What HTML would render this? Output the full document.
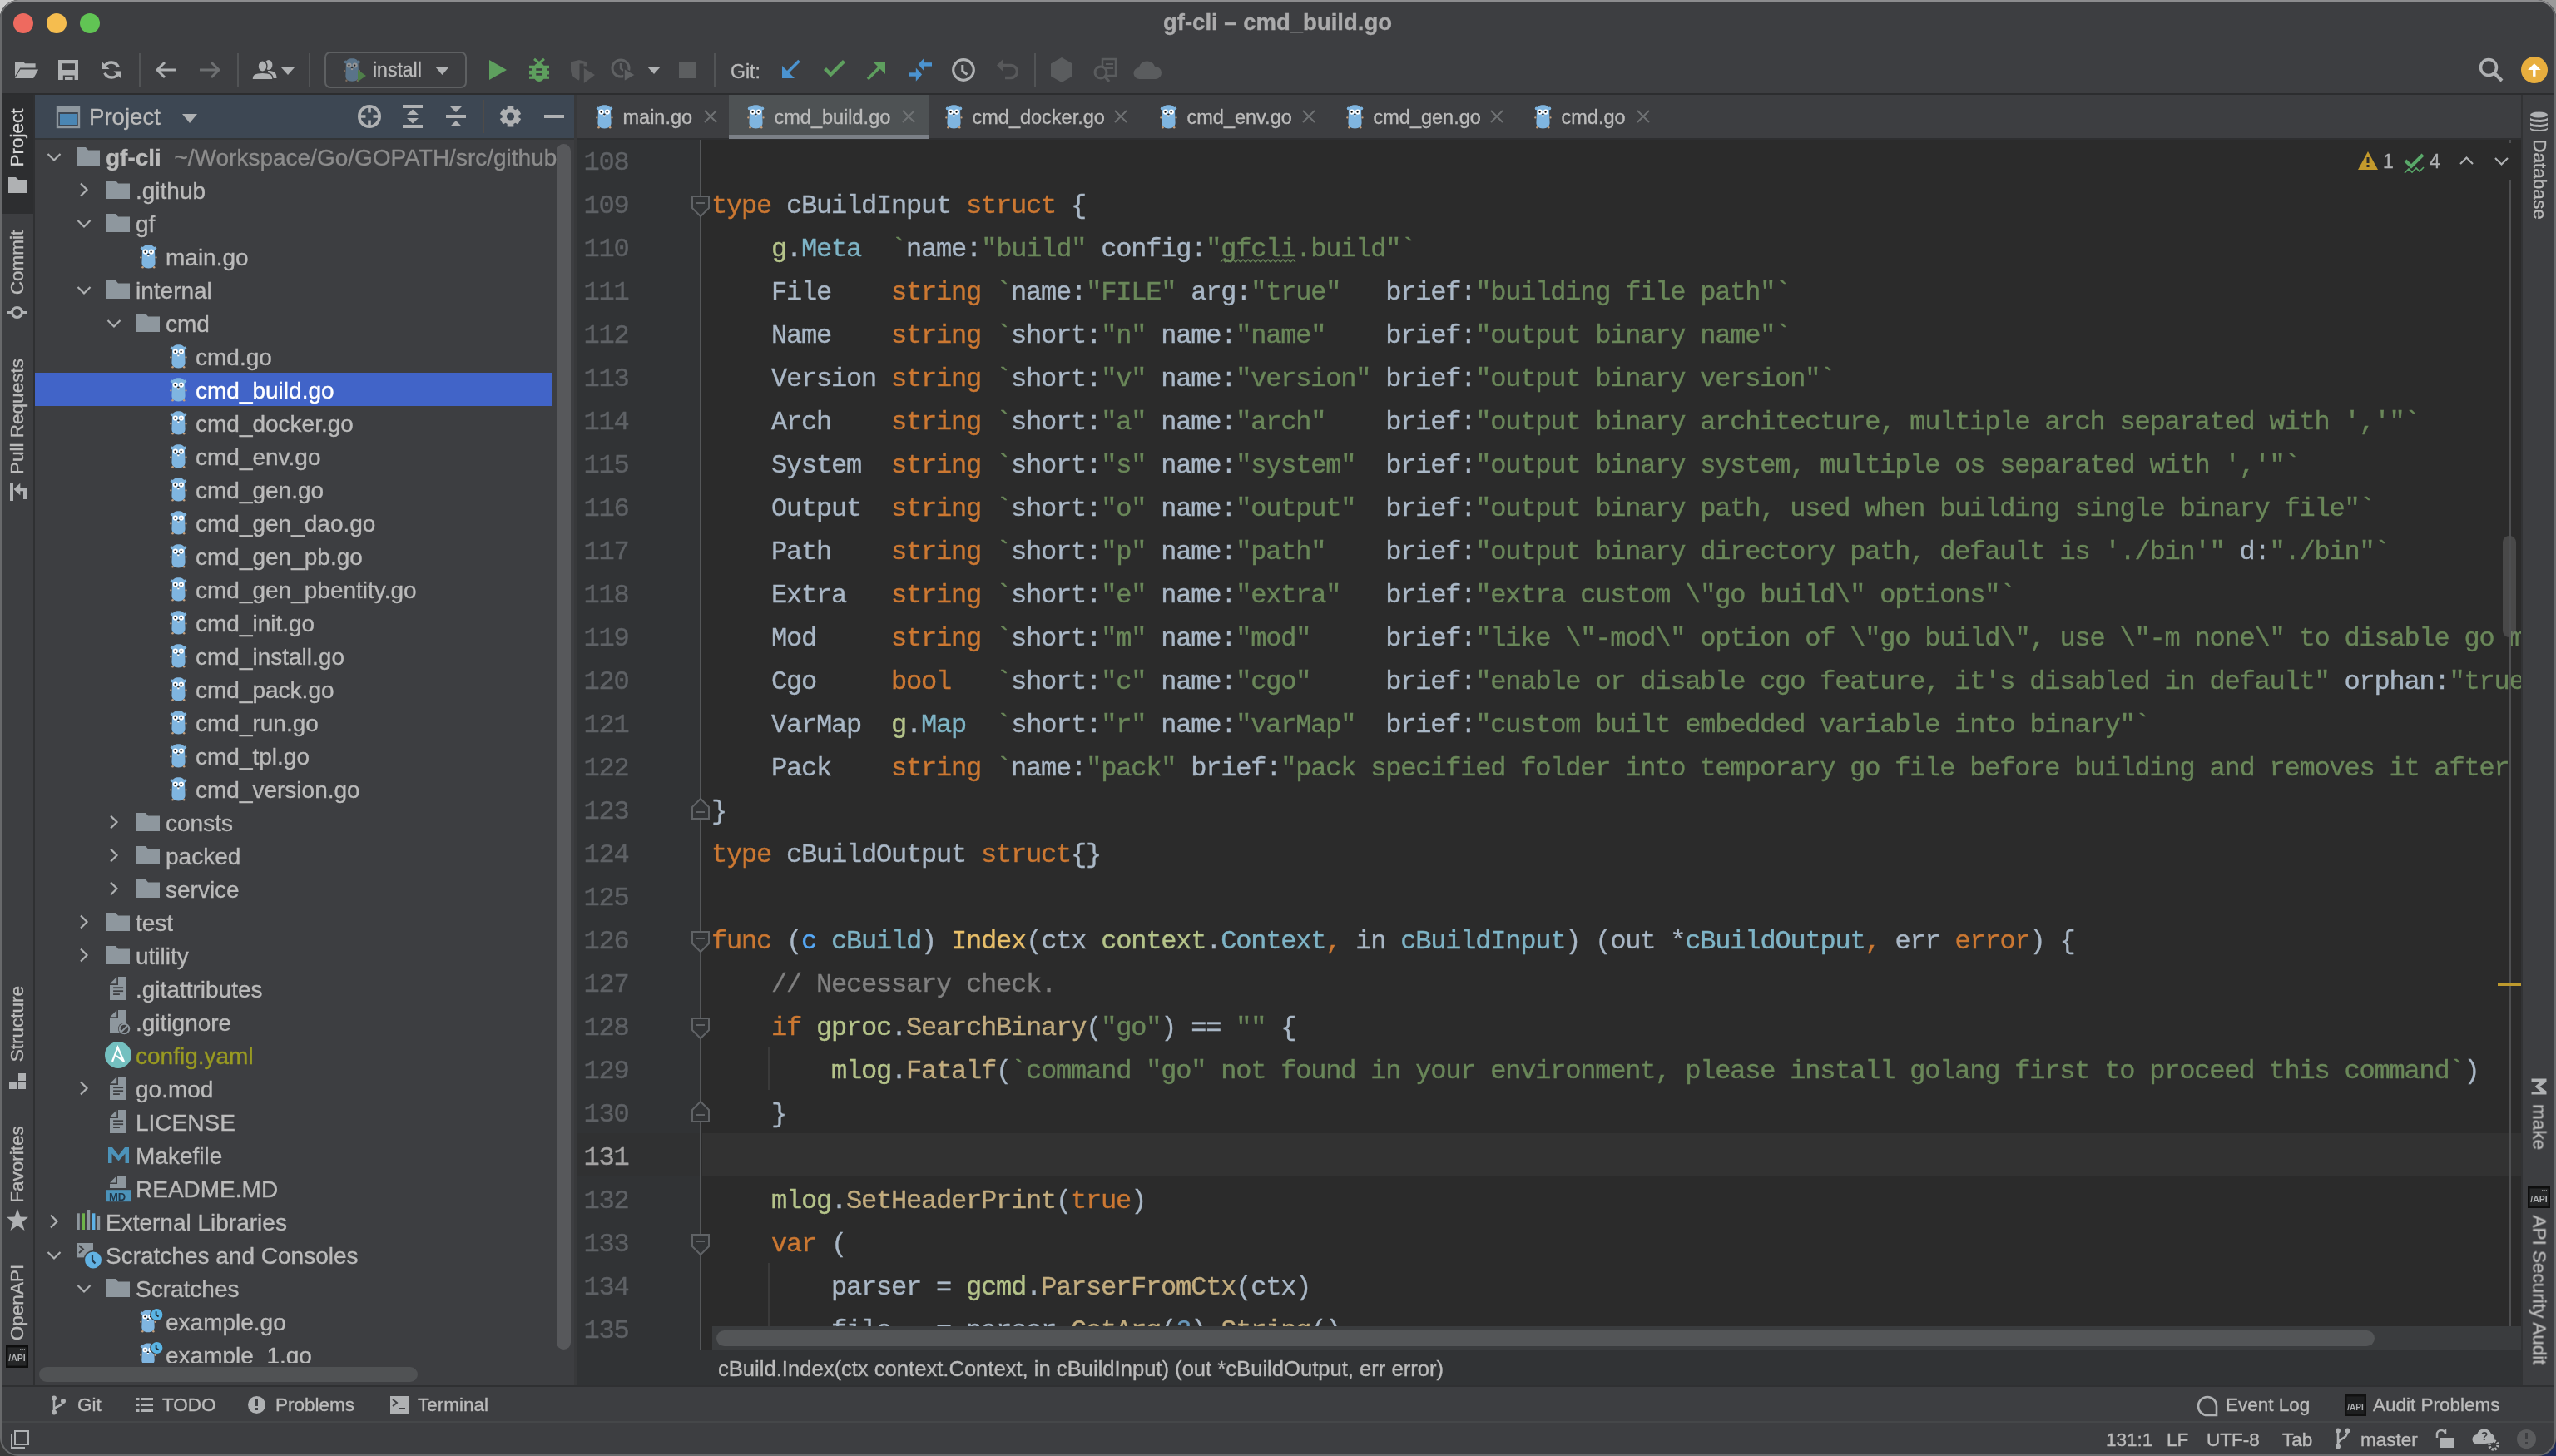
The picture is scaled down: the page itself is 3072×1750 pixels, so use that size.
<!DOCTYPE html><html><head><meta charset="utf-8"><style>
html,body{margin:0;padding:0;width:3072px;height:1750px;overflow:hidden;background:#2a2c30;}
.cn{position:absolute;width:40px;height:40px}
.a{position:absolute;white-space:pre;margin:0;padding:0;-webkit-text-stroke:0.35px currentColor;}
svg.a{overflow:visible}
#win{position:absolute;left:0;top:0;width:3072px;height:1750px;border-radius:22px;overflow:hidden;background:#3D3E41;will-change:transform;}
</style></head><body>
<svg width="0" height="0" style="position:absolute">
<defs>
<symbol id="gopher" viewBox="0 0 21 29">
<path d="M3 6 C3 2 6.2 0.2 10.5 0.2 C14.8 0.2 18 2 18 6 L18.5 20 C19.3 26 15.5 28.4 10.5 28.4 C5.5 28.4 1.7 26 2.5 20 Z" fill="#7FB5E0"/>
<circle cx="2.7" cy="4.4" r="1.9" fill="#7FB5E0"/><circle cx="18.3" cy="4.4" r="1.9" fill="#7FB5E0"/>
<circle cx="6.8" cy="8.6" r="3.1" fill="#fff"/><circle cx="13.9" cy="8.6" r="3.1" fill="#fff"/>
<circle cx="6.6" cy="8.7" r="1.15" fill="#000"/><circle cx="13.6" cy="8.7" r="1.15" fill="#000"/>
<rect x="9.3" y="11.9" width="2.1" height="2.4" fill="#fff"/><ellipse cx="10.35" cy="11.5" rx="1.3" ry="0.9" fill="#222"/>
<circle cx="1.3" cy="15.4" r="1.15" fill="#C4A07E"/><circle cx="19.5" cy="15.4" r="1.15" fill="#C4A07E"/>
<circle cx="3.5" cy="27.3" r="1.25" fill="#C4A07E"/><circle cx="17.2" cy="27.3" r="1.25" fill="#C4A07E"/>
</symbol>
<symbol id="folder" viewBox="0 0 28 22">
<path d="M0 0 H11 L14 3.5 H28 V22 H0 Z" fill="#8E979E"/>
</symbol>
<symbol id="chevR" viewBox="0 0 12 18"><path d="M2 1.5 L9.5 9 L2 16.5" fill="none" stroke="#AFB1B3" stroke-width="2.2"/></symbol>
<symbol id="chevD" viewBox="0 0 18 12"><path d="M1.5 2 L9 9.5 L16.5 2" fill="none" stroke="#AFB1B3" stroke-width="2.2"/></symbol>
<symbol id="doc" viewBox="0 0 20 28">
<path d="M10 0 H20 V28 H0 V10 H10 Z" fill="#8E979E"/><path d="M0.3 8.2 L8.2 0.3 V8.2 Z" fill="#8E979E"/>
<rect x="4.1" y="12.3" width="12" height="1.8" fill="#3D3E41"/><rect x="4.1" y="16.3" width="12" height="1.8" fill="#3D3E41"/><rect x="4.1" y="20.2" width="7.8" height="1.8" fill="#3D3E41"/>
</symbol>
<symbol id="docplain" viewBox="0 0 20 28">
<path d="M10 0 H20 V28 H0 V10 H10 Z" fill="#8E979E"/><path d="M0.3 8.2 L8.2 0.3 V8.2 Z" fill="#8E979E"/>
</symbol>
</defs></svg>
<div class="cn" style="left:0;top:0;background:#cfcfcf"></div><div class="cn" style="right:0;top:0;background:#9a9a9a"></div><div class="cn" style="left:0;bottom:0;background:#3a3a3a"></div><div class="cn" style="right:0;bottom:0;background:#1f2b5a"></div>
<div id="win">

<div class="a" style="left:0px;top:0px;width:3072px;height:112px;background:#3D3E41;"></div>
<div class="a" style="left:16px;top:16px;width:24px;height:24px;border-radius:50%;background:#EE6A5F"></div>
<div class="a" style="left:56px;top:16px;width:24px;height:24px;border-radius:50%;background:#F5BD4F"></div>
<div class="a" style="left:96px;top:16px;width:24px;height:24px;border-radius:50%;background:#61C454"></div>
<div class="a " style="left:1398px;top:10.28px;font:bold 27.5px/34.38px 'Liberation Sans', sans-serif;color:#ABABAC;">gf-cli – cmd_build.go</div>
<div class="a" style="left:167px;top:64px;width:2px;height:40px;background:#525456;"></div>
<div class="a" style="left:285px;top:64px;width:2px;height:40px;background:#525456;"></div>
<div class="a" style="left:371px;top:64px;width:2px;height:40px;background:#525456;"></div>
<div class="a" style="left:858px;top:64px;width:2px;height:40px;background:#525456;"></div>
<div class="a" style="left:1243px;top:64px;width:2px;height:40px;background:#525456;"></div>
<svg class="a" style="left:18px;top:74px;" width="28" height="20" viewBox="0 0 28 20"><path d="M0 0 H10 L12 2.2 H24.6 V7.6 H6.2 L0 18Z" fill="#AFB1B3"/><path d="M6.4 9.6 H28.2 L22.2 20 H0 Z" fill="#AFB1B3"/></svg>
<svg class="a" style="left:70px;top:72px;" width="24" height="24" viewBox="0 0 24 24"><path d="M0 0 H24 V24 H0 Z M4.2 4.2 V12 H20 V4.2 Z M5.8 18.4 V24 H19.6 V18.4 Z" fill="#AFB1B3" fill-rule="evenodd"/><rect x="8" y="20.4" width="9.6" height="3.6" fill="#AFB1B3"/></svg>
<svg class="a" style="left:122px;top:72px;" width="24" height="24" viewBox="0 0 24 24"><path d="M20.2 8.5 A9.2 9.2 0 0 0 3.8 7.5" fill="none" stroke="#AFB1B3" stroke-width="3.4"/><path d="M3.8 15.5 A9.2 9.2 0 0 0 20.2 16.5" fill="none" stroke="#AFB1B3" stroke-width="3.4"/><path d="M0 1.5 V11 H9.5 Z" fill="#AFB1B3"/><path d="M24 23 V13.5 H14.5 Z" fill="#AFB1B3"/></svg>
<svg class="a" style="left:186px;top:73px;" width="26" height="22" viewBox="0 0 26 22"><path d="M26 11 H4 M12 2 L3 11 L12 20" fill="none" stroke="#AFB1B3" stroke-width="3"/></svg>
<svg class="a" style="left:240px;top:73px;" width="26" height="22" viewBox="0 0 26 22"><path d="M0 11 H22 M14 2 L23 11 L14 20" fill="none" stroke="#6E7072" stroke-width="3"/></svg>
<svg class="a" style="left:303px;top:72px;" width="30" height="24" viewBox="0 0 30 24"><ellipse cx="19.8" cy="6" rx="4.6" ry="6" fill="#AFB1B3"/><path d="M19 13 C26 13 29.5 15 29.5 22 H20Z" fill="#AFB1B3"/><ellipse cx="12.5" cy="7.5" rx="5.4" ry="6.8" fill="#AFB1B3" stroke="#3D3E41" stroke-width="1.4"/><path d="M0 23.6 C0 17 4 15.2 12.5 15.2 C21 15.2 25 17 25 23.6Z" fill="#AFB1B3" stroke="#3D3E41" stroke-width="1.4"/></svg>
<svg class="a" style="left:338px;top:81px;" width="16" height="9" viewBox="0 0 16 9"><path d="M0 0 H16 L8 9Z" fill="#AFB1B3"/></svg>
<div class="a" style="left:390px;top:62px;width:167px;height:40px;border:2px solid #5E6062;border-radius:7px;"></div>
<svg class="a" style="left:413px;top:70px;opacity:.45" width="21" height="29"><use href="#gopher" width="20.5" height="28.5"/></svg>
<svg class="a" style="left:430px;top:84px;" width="11" height="14" viewBox="0 0 11 14"><path d="M0 0 L10 7 L0 14Z" fill="#4F7F49"/></svg>
<div class="a " style="left:448px;top:70.15px;font:normal 23px/28.75px 'Liberation Sans', sans-serif;color:#BBBBBB;">install</div>
<svg class="a" style="left:523px;top:80px;" width="17" height="10" viewBox="0 0 17 10"><path d="M0 0 H17 L8.5 10Z" fill="#AFB1B3"/></svg>
<svg class="a" style="left:588px;top:72px;" width="21" height="24" viewBox="0 0 21 24"><path d="M0 0 L21 12 L0 24Z" fill="#5E9F5E"/></svg>
<svg class="a" style="left:636px;top:70px;" width="24" height="28" viewBox="0 0 24 28"><path d="M6 0.8 L12 5.8 L18 0.8" fill="none" stroke="#5E9F5E" stroke-width="3"/><ellipse cx="12" cy="16.7" rx="7.6" ry="11.3" fill="#5E9F5E"/><rect x="0" y="8.7" width="24" height="16.1" fill="#5E9F5E"/><rect x="0" y="12.2" width="3" height="2.6" fill="#3D3E41"/><rect x="21" y="12.2" width="3" height="2.6" fill="#3D3E41"/><rect x="0" y="19.5" width="3" height="2.1" fill="#3D3E41"/><rect x="21" y="19.5" width="3" height="2.1" fill="#3D3E41"/><rect x="8.3" y="12.2" width="7.6" height="2.6" fill="#3D3E41"/><rect x="8.3" y="18" width="7.6" height="2.7" fill="#3D3E41"/></svg>
<svg class="a" style="left:686px;top:72px;" width="30" height="28" viewBox="0 0 30 28"><path d="M0 2.5 L10 0 L20 2.5 V7.5 H15.5 V4.5 H10.5 V22 L10 24.5 C5 22.5 0 19 0 12Z" fill="#58595B"/><path d="M15.8 10 L29 18 L15.8 28Z" fill="#58595B"/></svg>
<svg class="a" style="left:734px;top:70px;" width="30" height="28" viewBox="0 0 30 28"><circle cx="12" cy="12" r="10" fill="none" stroke="#5F6163" stroke-width="3"/><path d="M12 6 V12 L15 15" stroke="#5F6163" stroke-width="2.5" fill="none"/><path d="M16 12 L30 20 L16 28Z" fill="#5F6163" stroke="#3D3E41" stroke-width="1.5"/></svg>
<svg class="a" style="left:778px;top:80px;" width="16" height="9" viewBox="0 0 16 9"><path d="M0 0 H16 L8 9Z" fill="#AFB1B3"/></svg>
<div class="a" style="left:816px;top:74px;width:20px;height:20px;background:#5C5E60;"></div>
<div class="a " style="left:878px;top:71.65px;font:normal 23px/28.75px 'Liberation Sans', sans-serif;color:#BBBBBB;">Git:</div>
<svg class="a" style="left:939px;top:71px;" width="24" height="24" viewBox="0 0 24 24"><path d="M21.5 2 L5 18.5" stroke="#4B93D0" stroke-width="3.6"/><path d="M1 8 V23 H16 Z" fill="#4B93D0"/></svg>
<svg class="a" style="left:989px;top:71px;" width="28" height="24" viewBox="0 0 28 24"><path d="M2.5 11.5 L9.5 18.5 L25.5 2.5" fill="none" stroke="#5E9F5E" stroke-width="4.4"/></svg>
<svg class="a" style="left:1041px;top:73px;" width="24" height="24" viewBox="0 0 24 24"><path d="M2 22 L19 5" stroke="#5E9F5E" stroke-width="3.6"/><path d="M8 1 H23 V16 Z" fill="#5E9F5E"/></svg>
<svg class="a" style="left:1091px;top:69px;" width="30" height="30" viewBox="0 0 30 30"><path d="M12.7 8.3 L19.9 0.5 V16.8Z" fill="#4B93D0"/><rect x="19.5" y="6.2" width="9.5" height="4.4" fill="#4B93D0"/><path d="M17.1 20.5 L9.8 12.4 V28.7Z" fill="#4B93D0"/><rect x="1" y="18.3" width="9.2" height="4.4" fill="#4B93D0"/></svg>
<svg class="a" style="left:1143px;top:69px;" width="30" height="30" viewBox="0 0 30 30"><circle cx="15" cy="15" r="12.3" fill="none" stroke="#AFB1B3" stroke-width="3.2"/><path d="M13.8 9 V16.5 L19.5 20.5" fill="none" stroke="#AFB1B3" stroke-width="3"/></svg>
<svg class="a" style="left:1198px;top:70px;" width="27" height="26" viewBox="0 0 27 26"><path d="M6 8.5 H17 A7.5 7.5 0 0 1 17 23.5 H10" fill="none" stroke="#58595B" stroke-width="3.4"/><path d="M0 8.5 L7.5 1 V16Z" fill="#58595B"/></svg>
<svg class="a" style="left:1261px;top:69px;" width="30" height="30" viewBox="0 0 30 30"><path d="M15 0 L28 7.5 V22.5 L15 30 L2 22.5 V7.5Z" fill="#5A5C5E"/></svg>
<svg class="a" style="left:1313px;top:70px;" width="30" height="30" viewBox="0 0 30 30"><rect x="12" y="1" width="16" height="20" fill="none" stroke="#5A5C5E" stroke-width="2.5"/><path d="M16 7 H25 M16 12 H25" stroke="#5A5C5E" stroke-width="2"/><circle cx="10" cy="17" r="7" fill="#3D3E41" stroke="#5A5C5E" stroke-width="3"/><path d="M15 22 L20 28" stroke="#5A5C5E" stroke-width="3.5"/></svg>
<svg class="a" style="left:1363px;top:72px;" width="33" height="23" viewBox="0 0 33 23"><path d="M7 23 A7 7 0 0 1 6 9 A10 10 0 0 1 25 8 A7.5 7.5 0 0 1 26 23Z" fill="#5A5C5E"/></svg>
<svg class="a" style="left:2979px;top:69px;" width="30" height="30" viewBox="0 0 30 30"><circle cx="12" cy="12" r="9.5" fill="none" stroke="#AFB1B3" stroke-width="3.5"/><path d="M19 19 L28 28" stroke="#AFB1B3" stroke-width="4"/></svg>
<div class="a" style="left:3030px;top:68px;width:32px;height:32px;border-radius:50%;background:#E8AE3E"></div>
<svg class="a" style="left:3036px;top:74px;" width="20" height="20" viewBox="0 0 20 20"><path d="M2.1 9.9 L9.8 2.2 L17.7 9.9Z" fill="#fff"/><rect x="8.1" y="9.5" width="3.4" height="8.3" fill="#fff"/></svg>
<div class="a" style="left:0px;top:112px;width:3072px;height:2px;background:#2C2D2F;"></div>
<div class="a" style="left:0px;top:114px;width:40px;height:1553px;background:#3D3E41;"></div>
<div class="a" style="left:0px;top:114px;width:40px;height:143px;background:#2D2E30;"></div>
<div class="a" style="left:40px;top:114px;width:2px;height:1553px;background:#2F3032;"></div>
<div class="a" style="left:-129.6px;top:151.5px;width:300px;height:27.0px;font:22.5px/27.0px 'Liberation Sans', sans-serif;color:#D8D8D8;text-align:center;transform:rotate(-90deg);">Project</div>
<svg class="a" style="left:10px;top:213px;" width="22" height="19" viewBox="0 0 22 19"><path d="M0 0 H9 L12 3 H22 V19 H0Z" fill="#AFB1B3"/></svg>
<div class="a" style="left:-129.6px;top:302.0px;width:300px;height:27.0px;font:22.5px/27.0px 'Liberation Sans', sans-serif;color:#BBBBBB;text-align:center;transform:rotate(-90deg);">Commit</div>
<svg class="a" style="left:8px;top:367px;" width="25" height="17" viewBox="0 0 25 17"><circle cx="12.5" cy="8.5" r="6" fill="none" stroke="#AFB1B3" stroke-width="3.2"/><path d="M0 8.5 H6 M19 8.5 H25" stroke="#AFB1B3" stroke-width="3.2"/></svg>
<div class="a" style="left:-129.6px;top:487.1px;width:300px;height:27.0px;font:22.5px/27.0px 'Liberation Sans', sans-serif;color:#BBBBBB;text-align:center;transform:rotate(-90deg);">Pull Requests</div>
<svg class="a" style="left:11px;top:579px;" width="22" height="24" viewBox="0 0 22 24"><rect x="1" y="1" width="4" height="22" fill="#AFB1B3"/><path d="M5.5 9 L13.3 1.8 V16.2Z" fill="#AFB1B3"/><rect x="13" y="7" width="8" height="4.3" fill="#AFB1B3"/><rect x="17" y="7" width="4" height="14" fill="#AFB1B3"/></svg>
<div class="a" style="left:-129.6px;top:1216.5px;width:300px;height:27.0px;font:22.5px/27.0px 'Liberation Sans', sans-serif;color:#BBBBBB;text-align:center;transform:rotate(-90deg);">Structure</div>
<svg class="a" style="left:11px;top:1290px;" width="20" height="19" viewBox="0 0 20 19"><rect x="0" y="10" width="9" height="9" fill="#AFB1B3"/><rect x="11" y="0" width="9" height="9" fill="#AFB1B3"/><rect x="11" y="10" width="9" height="9" fill="#AFB1B3"/></svg>
<div class="a" style="left:-129.6px;top:1385.5px;width:300px;height:27.0px;font:22.5px/27.0px 'Liberation Sans', sans-serif;color:#BBBBBB;text-align:center;transform:rotate(-90deg);">Favorites</div>
<svg class="a" style="left:8px;top:1453px;" width="26" height="27" viewBox="0 0 26 27"><path d="M13 0 L16.5 9.5 L26 9.8 L18.5 16 L21.5 26 L13 20 L4.5 26 L7.5 16 L0 9.8 L9.5 9.5Z" fill="#AFB1B3"/></svg>
<div class="a" style="left:-129.6px;top:1551.5px;width:300px;height:27.0px;font:22.5px/27.0px 'Liberation Sans', sans-serif;color:#BBBBBB;text-align:center;transform:rotate(-90deg);">OpenAPI</div>
<svg class="a" style="left:7px;top:1617px;" width="27" height="27" viewBox="0 0 27 27"><rect x="1.2" y="1.2" width="24.6" height="24.6" fill="#262728" stroke="#0E0E0E" stroke-width="2.4"/><text x="13.5" y="19" font-family="Liberation Sans" font-size="10.5" font-weight="bold" fill="#AFB1B3" text-anchor="middle">/API</text><path d="M17 5 H23" stroke="#AFB1B3" stroke-width="1.4" stroke-dasharray="1.4 1"/></svg>
<div class="a" style="left:3030px;top:114px;width:42px;height:1553px;background:#3D3E41;"></div>
<div class="a" style="left:3030px;top:114px;width:2px;height:1553px;background:#323335;"></div>
<svg class="a" style="left:3040px;top:134px;" width="23" height="25" viewBox="0 0 23 25"><ellipse cx="11.5" cy="4" rx="10.5" ry="3.5" fill="#AFB1B3"/><path d="M1 7 C1 11 22 11 22 7 V10 C22 14 1 14 1 10Z M1 13 C1 17 22 17 22 13 V16 C22 20 1 20 1 16Z M1 19 C1 23 22 23 22 19 V21 C22 25 1 25 1 21Z" fill="#AFB1B3"/></svg>
<div class="a" style="left:2901.7px;top:202.2px;width:300px;height:27.0px;font:22.5px/27.0px 'Liberation Sans', sans-serif;color:#BBBBBB;text-align:center;transform:rotate(90deg);">Database</div>
<svg class="a" style="left:3042px;top:1297px;" width="19" height="18" viewBox="0 0 19 18"><g transform="rotate(90 9.5 9)"><path d="M0 18 V0 H4 L9.5 8 L15 0 H19 V18 H15.5 V7 L9.5 14 L3.5 7 V18Z" fill="#AFB1B3"/></g></svg>
<div class="a" style="left:2901.7px;top:1341.3px;width:300px;height:27.0px;font:22.5px/27.0px 'Liberation Sans', sans-serif;color:#BBBBBB;text-align:center;transform:rotate(90deg);">make</div>
<svg class="a" style="left:3038px;top:1426px;" width="27" height="26" viewBox="0 0 27 26"><rect x="1.2" y="1.2" width="24.6" height="23.6" fill="#262728" stroke="#0E0E0E" stroke-width="2.4"/><text x="13.5" y="18.5" font-family="Liberation Sans" font-size="10.5" font-weight="bold" fill="#AFB1B3" text-anchor="middle">/API</text><path d="M17 5 H23" stroke="#AFB1B3" stroke-width="1.4" stroke-dasharray="1.4 1"/></svg>
<div class="a" style="left:2901.7px;top:1536.5px;width:300px;height:27.0px;font:22.5px/27.0px 'Liberation Sans', sans-serif;color:#BBBBBB;text-align:center;transform:rotate(90deg);">API Security Audit</div>
<div class="a" style="left:42px;top:114px;width:650px;height:1553px;background:#3D3E41;"></div>
<div class="a" style="left:42px;top:114px;width:650px;height:52px;background:#3D4753;"></div>
<div class="a" style="left:42px;top:166px;width:650px;height:2px;background:#323537;"></div>
<svg class="a" style="left:68px;top:128px;" width="28" height="26" viewBox="0 0 28 26"><rect x="1" y="1" width="26" height="24" fill="none" stroke="#8E979E" stroke-width="2.4"/><rect x="1" y="1" width="26" height="6" fill="#8E979E"/><rect x="4" y="9" width="20" height="13" fill="#4A86B4"/></svg>
<div class="a " style="left:107px;top:124.18px;font:normal 27.6px/34.5px 'Liberation Sans', sans-serif;color:#BBBBBB;">Project</div>
<svg class="a" style="left:219px;top:137px;" width="18" height="11" viewBox="0 0 18 11"><path d="M0 0 H18 L9 11Z" fill="#AFB1B3"/></svg>
<svg class="a" style="left:430px;top:126px;" width="28" height="28" viewBox="0 0 28 28"><circle cx="14" cy="14" r="12.2" fill="none" stroke="#AFB1B3" stroke-width="3.6"/><path d="M14 1 V9.5 M14 18.5 V27 M1 14 H9.5 M18.5 14 H27" stroke="#AFB1B3" stroke-width="3.6"/></svg>
<svg class="a" style="left:484px;top:126px;" width="24" height="28" viewBox="0 0 24 28"><rect x="0" y="0" width="24" height="4" fill="#AFB1B3"/><rect x="0" y="24" width="24" height="4" fill="#AFB1B3"/><path d="M5 12 L12 5.5 L19 12Z M5 16 L12 22.5 L19 16Z" fill="#AFB1B3"/></svg>
<svg class="a" style="left:536px;top:127px;" width="24" height="26" viewBox="0 0 24 26"><rect x="0" y="11" width="24" height="4" fill="#AFB1B3"/><path d="M5 1 H19 L12 8Z M5 25 H19 L12 18Z" fill="#AFB1B3"/></svg>
<div class="a" style="left:580px;top:120px;width:2px;height:40px;background:#4E4B48;"></div>
<svg class="a" style="left:601px;top:127px;" width="25" height="26" viewBox="0 0 25 26"><path fill-rule="evenodd" d="M8.70 3.97 L8.70 0.57 L16.30 0.57 L16.30 3.97 L18.42 5.19 L21.37 3.49 L25.17 10.08 L22.22 11.78 L22.22 14.22 L25.17 15.92 L21.37 22.51 L18.42 20.81 L16.30 22.03 L16.30 25.43 L8.70 25.43 L8.70 22.03 L6.58 20.81 L3.63 22.51 L-0.17 15.92 L2.78 14.22 L2.78 11.78 L-0.17 10.08 L3.63 3.49 L6.58 5.19Z M17.1 13 A4.6 4.6 0 1 0 7.9 13 A4.6 4.6 0 1 0 17.1 13Z" fill="#AFB1B3"/></svg>
<div class="a" style="left:654px;top:138px;width:24px;height:4px;background:#AFB1B3;"></div>
<div class="a" style="left:42px;top:168px;width:628px;height:1470px;overflow:hidden;">
<svg class="a" style="left:14px;top:15px" width="18" height="12"><use href="#chevD" width="18" height="12"/></svg>
<svg class="a" style="left:50px;top:9px" width="28" height="22"><use href="#folder" width="28" height="22"/></svg>
<div class="a" style="left:85px;top:1.79px;font:normal 28px/40px 'Liberation Sans', sans-serif;color:#BBBBBB"><b>gf-cli</b><span style="color:#8C8C8C">  ~/Workspace/Go/GOPATH/src/github.com/gogf/gf-cli</span></div>
<svg class="a" style="left:53px;top:51px" width="12" height="18"><use href="#chevR" width="12" height="18"/></svg>
<svg class="a" style="left:86px;top:49px" width="28" height="22"><use href="#folder" width="28" height="22"/></svg>
<div class="a" style="left:121px;top:41.79px;font:normal 28px/40px 'Liberation Sans', sans-serif;color:#BBBBBB">.github</div>
<svg class="a" style="left:50px;top:95px" width="18" height="12"><use href="#chevD" width="18" height="12"/></svg>
<svg class="a" style="left:86px;top:89px" width="28" height="22"><use href="#folder" width="28" height="22"/></svg>
<div class="a" style="left:121px;top:81.79px;font:normal 28px/40px 'Liberation Sans', sans-serif;color:#BBBBBB">gf</div>
<svg class="a" style="left:126px;top:126px" width="21" height="29"><use href="#gopher" width="21" height="29"/></svg>
<div class="a" style="left:157px;top:121.79px;font:normal 28px/40px 'Liberation Sans', sans-serif;color:#BBBBBB">main.go</div>
<svg class="a" style="left:50px;top:175px" width="18" height="12"><use href="#chevD" width="18" height="12"/></svg>
<svg class="a" style="left:86px;top:169px" width="28" height="22"><use href="#folder" width="28" height="22"/></svg>
<div class="a" style="left:121px;top:161.79px;font:normal 28px/40px 'Liberation Sans', sans-serif;color:#BBBBBB">internal</div>
<svg class="a" style="left:86px;top:215px" width="18" height="12"><use href="#chevD" width="18" height="12"/></svg>
<svg class="a" style="left:122px;top:209px" width="28" height="22"><use href="#folder" width="28" height="22"/></svg>
<div class="a" style="left:157px;top:201.79px;font:normal 28px/40px 'Liberation Sans', sans-serif;color:#BBBBBB">cmd</div>
<svg class="a" style="left:162px;top:246px" width="21" height="29"><use href="#gopher" width="21" height="29"/></svg>
<div class="a" style="left:193px;top:241.79px;font:normal 28px/40px 'Liberation Sans', sans-serif;color:#BBBBBB">cmd.go</div>
<div class="a" style="left:0px;top:280px;width:622px;height:40px;background:#4164C8;"></div>
<svg class="a" style="left:162px;top:286px" width="21" height="29"><use href="#gopher" width="21" height="29"/></svg>
<div class="a" style="left:193px;top:281.79px;font:normal 28px/40px 'Liberation Sans', sans-serif;color:#FFFFFF">cmd_build.go</div>
<svg class="a" style="left:162px;top:326px" width="21" height="29"><use href="#gopher" width="21" height="29"/></svg>
<div class="a" style="left:193px;top:321.79px;font:normal 28px/40px 'Liberation Sans', sans-serif;color:#BBBBBB">cmd_docker.go</div>
<svg class="a" style="left:162px;top:366px" width="21" height="29"><use href="#gopher" width="21" height="29"/></svg>
<div class="a" style="left:193px;top:361.79px;font:normal 28px/40px 'Liberation Sans', sans-serif;color:#BBBBBB">cmd_env.go</div>
<svg class="a" style="left:162px;top:406px" width="21" height="29"><use href="#gopher" width="21" height="29"/></svg>
<div class="a" style="left:193px;top:401.79px;font:normal 28px/40px 'Liberation Sans', sans-serif;color:#BBBBBB">cmd_gen.go</div>
<svg class="a" style="left:162px;top:446px" width="21" height="29"><use href="#gopher" width="21" height="29"/></svg>
<div class="a" style="left:193px;top:441.79px;font:normal 28px/40px 'Liberation Sans', sans-serif;color:#BBBBBB">cmd_gen_dao.go</div>
<svg class="a" style="left:162px;top:486px" width="21" height="29"><use href="#gopher" width="21" height="29"/></svg>
<div class="a" style="left:193px;top:481.79px;font:normal 28px/40px 'Liberation Sans', sans-serif;color:#BBBBBB">cmd_gen_pb.go</div>
<svg class="a" style="left:162px;top:526px" width="21" height="29"><use href="#gopher" width="21" height="29"/></svg>
<div class="a" style="left:193px;top:521.79px;font:normal 28px/40px 'Liberation Sans', sans-serif;color:#BBBBBB">cmd_gen_pbentity.go</div>
<svg class="a" style="left:162px;top:566px" width="21" height="29"><use href="#gopher" width="21" height="29"/></svg>
<div class="a" style="left:193px;top:561.79px;font:normal 28px/40px 'Liberation Sans', sans-serif;color:#BBBBBB">cmd_init.go</div>
<svg class="a" style="left:162px;top:606px" width="21" height="29"><use href="#gopher" width="21" height="29"/></svg>
<div class="a" style="left:193px;top:601.79px;font:normal 28px/40px 'Liberation Sans', sans-serif;color:#BBBBBB">cmd_install.go</div>
<svg class="a" style="left:162px;top:646px" width="21" height="29"><use href="#gopher" width="21" height="29"/></svg>
<div class="a" style="left:193px;top:641.79px;font:normal 28px/40px 'Liberation Sans', sans-serif;color:#BBBBBB">cmd_pack.go</div>
<svg class="a" style="left:162px;top:686px" width="21" height="29"><use href="#gopher" width="21" height="29"/></svg>
<div class="a" style="left:193px;top:681.79px;font:normal 28px/40px 'Liberation Sans', sans-serif;color:#BBBBBB">cmd_run.go</div>
<svg class="a" style="left:162px;top:726px" width="21" height="29"><use href="#gopher" width="21" height="29"/></svg>
<div class="a" style="left:193px;top:721.79px;font:normal 28px/40px 'Liberation Sans', sans-serif;color:#BBBBBB">cmd_tpl.go</div>
<svg class="a" style="left:162px;top:766px" width="21" height="29"><use href="#gopher" width="21" height="29"/></svg>
<div class="a" style="left:193px;top:761.79px;font:normal 28px/40px 'Liberation Sans', sans-serif;color:#BBBBBB">cmd_version.go</div>
<svg class="a" style="left:89px;top:811px" width="12" height="18"><use href="#chevR" width="12" height="18"/></svg>
<svg class="a" style="left:122px;top:809px" width="28" height="22"><use href="#folder" width="28" height="22"/></svg>
<div class="a" style="left:157px;top:801.79px;font:normal 28px/40px 'Liberation Sans', sans-serif;color:#BBBBBB">consts</div>
<svg class="a" style="left:89px;top:851px" width="12" height="18"><use href="#chevR" width="12" height="18"/></svg>
<svg class="a" style="left:122px;top:849px" width="28" height="22"><use href="#folder" width="28" height="22"/></svg>
<div class="a" style="left:157px;top:841.79px;font:normal 28px/40px 'Liberation Sans', sans-serif;color:#BBBBBB">packed</div>
<svg class="a" style="left:89px;top:891px" width="12" height="18"><use href="#chevR" width="12" height="18"/></svg>
<svg class="a" style="left:122px;top:889px" width="28" height="22"><use href="#folder" width="28" height="22"/></svg>
<div class="a" style="left:157px;top:881.79px;font:normal 28px/40px 'Liberation Sans', sans-serif;color:#BBBBBB">service</div>
<svg class="a" style="left:53px;top:931px" width="12" height="18"><use href="#chevR" width="12" height="18"/></svg>
<svg class="a" style="left:86px;top:929px" width="28" height="22"><use href="#folder" width="28" height="22"/></svg>
<div class="a" style="left:121px;top:921.79px;font:normal 28px/40px 'Liberation Sans', sans-serif;color:#BBBBBB">test</div>
<svg class="a" style="left:53px;top:971px" width="12" height="18"><use href="#chevR" width="12" height="18"/></svg>
<svg class="a" style="left:86px;top:969px" width="28" height="22"><use href="#folder" width="28" height="22"/></svg>
<div class="a" style="left:121px;top:961.79px;font:normal 28px/40px 'Liberation Sans', sans-serif;color:#BBBBBB">utility</div>
<svg class="a" style="left:90px;top:1006px" width="20" height="28"><use href="#doc" width="20" height="28"/></svg>
<div class="a" style="left:121px;top:1001.79px;font:normal 28px/40px 'Liberation Sans', sans-serif;color:#BBBBBB">.gitattributes</div>
<svg class="a" style="left:90px;top:1046px" width="26" height="30"><use href="#docplain" width="20" height="28"/><circle cx="17.5" cy="22.5" r="7.5" fill="#3D3E41"/><circle cx="17.5" cy="22.5" r="5.8" fill="none" stroke="#8E979E" stroke-width="2"/><path d="M14 26 L21 19" stroke="#8E979E" stroke-width="2"/></svg>
<div class="a" style="left:121px;top:1041.79px;font:normal 28px/40px 'Liberation Sans', sans-serif;color:#BBBBBB">.gitignore</div>
<svg class="a" style="left:84px;top:1084px" width="32" height="32"><circle cx="16" cy="16" r="16" fill="#74C0C0"/><path d="M9 24 L15.5 7 L23 24 L14 17" fill="none" stroke="#fff" stroke-width="2.2"/></svg>
<div class="a" style="left:121px;top:1081.79px;font:normal 28px/40px 'Liberation Sans', sans-serif;color:#999A22">config.yaml</div>
<svg class="a" style="left:53px;top:1131px" width="12" height="18"><use href="#chevR" width="12" height="18"/></svg>
<svg class="a" style="left:90px;top:1126px" width="20" height="28"><use href="#doc" width="20" height="28"/></svg>
<div class="a" style="left:121px;top:1121.79px;font:normal 28px/40px 'Liberation Sans', sans-serif;color:#BBBBBB">go.mod</div>
<svg class="a" style="left:90px;top:1166px" width="20" height="28"><use href="#doc" width="20" height="28"/></svg>
<div class="a" style="left:121px;top:1161.79px;font:normal 28px/40px 'Liberation Sans', sans-serif;color:#BBBBBB">LICENSE</div>
<svg class="a" style="left:88px;top:1210.5px" width="25" height="19"><path d="M0 19 V0 H5 L12.5 9.5 L20 0 H25 V19 H20.5 V7.5 L12.5 16.5 L4.5 7.5 V19Z" fill="#4C93BA"/></svg>
<div class="a" style="left:121px;top:1201.79px;font:normal 28px/40px 'Liberation Sans', sans-serif;color:#BBBBBB">Makefile</div>
<svg class="a" style="left:86px;top:1245.5px" width="31" height="31"><path d="M13 0 H24 V14 H4 V9 H13Z" fill="#8E979E"/><path d="M4 7.5 L11.5 0 V7.5Z" fill="#8E979E"/><rect x="0" y="16.2" width="30" height="14" fill="#4C93BA"/><text x="13" y="28.6" font-family="Liberation Sans" font-size="13" font-weight="bold" fill="#22384A" text-anchor="middle">MD</text></svg>
<div class="a" style="left:121px;top:1241.79px;font:normal 28px/40px 'Liberation Sans', sans-serif;color:#BBBBBB">README.MD</div>
<svg class="a" style="left:17px;top:1291px" width="12" height="18"><use href="#chevR" width="12" height="18"/></svg>
<svg class="a" style="left:49.9px;top:1286px" width="30" height="24"><rect x="0" y="4.3" width="3.8" height="19.7" fill="#8E979E"/><rect x="6.2" y="4.3" width="3.8" height="19.7" fill="#6DB34A"/><rect x="12.4" y="0" width="3.8" height="24" fill="#8E979E"/><rect x="18.6" y="4.3" width="3.8" height="19.7" fill="#5EB2E6"/><rect x="24.2" y="8" width="4" height="16" fill="#8E979E"/></svg>
<div class="a" style="left:85px;top:1281.79px;font:normal 28px/40px 'Liberation Sans', sans-serif;color:#BBBBBB">External Libraries</div>
<svg class="a" style="left:14px;top:1335px" width="18" height="12"><use href="#chevD" width="18" height="12"/></svg>
<svg class="a" style="left:50px;top:1326px" width="32" height="32"><rect x="0" y="0" width="20" height="17.4" fill="#8E979E"/><path d="M3 3 L8 7.5 L3 12" stroke="#3D3E41" stroke-width="2" fill="none"/><circle cx="20" cy="20.5" r="11.5" fill="#3D3E41"/><circle cx="20" cy="20.5" r="10" fill="#62B2E3"/><path d="M19 14.5 V21 L22.5 24.5" stroke="#233E52" stroke-width="2.2" fill="none"/></svg>
<div class="a" style="left:85px;top:1321.79px;font:normal 28px/40px 'Liberation Sans', sans-serif;color:#BBBBBB">Scratches and Consoles</div>
<svg class="a" style="left:50px;top:1375px" width="18" height="12"><use href="#chevD" width="18" height="12"/></svg>
<svg class="a" style="left:86px;top:1369px" width="28" height="22"><use href="#folder" width="28" height="22"/></svg>
<div class="a" style="left:121px;top:1361.79px;font:normal 28px/40px 'Liberation Sans', sans-serif;color:#BBBBBB">Scratches</div>
<svg class="a" style="left:125.7px;top:1405px" width="30" height="30"><use href="#gopher" width="20" height="29" x="0" y="0.5"/><circle cx="20.5" cy="7" r="7.6" fill="#5AB4E4" stroke="#3D3E41" stroke-width="1.4"/><path d="M19.6 3.2 V7.4 L22.6 9.6" stroke="#1E2B33" stroke-width="1.8" fill="none"/></svg>
<div class="a" style="left:157px;top:1401.79px;font:normal 28px/40px 'Liberation Sans', sans-serif;color:#BBBBBB">example.go</div>
<svg class="a" style="left:125.7px;top:1445px" width="30" height="30"><use href="#gopher" width="20" height="29" x="0" y="0.5"/><circle cx="20.5" cy="7" r="7.6" fill="#5AB4E4" stroke="#3D3E41" stroke-width="1.4"/><path d="M19.6 3.2 V7.4 L22.6 9.6" stroke="#1E2B33" stroke-width="1.8" fill="none"/></svg>
<div class="a" style="left:157px;top:1441.79px;font:normal 28px/40px 'Liberation Sans', sans-serif;color:#BBBBBB">example_1.go</div>
</div>
<div class="a" style="left:669px;top:173px;width:17px;height:1449px;border-radius:9px;background:#57585B;"></div>
<div class="a" style="left:47px;top:1643px;width:455px;height:18px;border-radius:9px;background:#505254;"></div>
<div class="a" style="left:42px;top:1665px;width:650px;height:2px;background:#303133;"></div>
<div class="a" style="left:690px;top:114px;width:4px;height:1553px;background:#38393B;"></div>
<div class="a" style="left:694px;top:114px;width:2336px;height:52px;background:#3D3E41;"></div>
<div class="a" style="left:694px;top:166px;width:2336px;height:2px;background:#2E2F31;"></div>
<div class="a" style="left:876px;top:114px;width:240px;height:52px;background:#4E5254;"></div>
<div class="a" style="left:876px;top:162px;width:240px;height:5px;background:#7B8087;"></div>
<svg class="a" style="left:716px;top:126px" width="21" height="29"><use href="#gopher" width="21" height="29"/></svg>
<div class="a " style="left:748.5px;top:126.66px;font:normal 23.5px/29.38px 'Liberation Sans', sans-serif;color:#BBBBBB;">main.go</div>
<svg class="a" style="left:846px;top:132px;" width="16" height="16" viewBox="0 0 16 16"><path d="M1 1 L15 15 M15 1 L1 15" stroke="#6F7274" stroke-width="2"/></svg>
<svg class="a" style="left:898px;top:126px" width="21" height="29"><use href="#gopher" width="21" height="29"/></svg>
<div class="a " style="left:930.5px;top:126.66px;font:normal 23.5px/29.38px 'Liberation Sans', sans-serif;color:#BBBBBB;">cmd_build.go</div>
<svg class="a" style="left:1084px;top:132px;" width="16" height="16" viewBox="0 0 16 16"><path d="M1 1 L15 15 M15 1 L1 15" stroke="#6F7274" stroke-width="2"/></svg>
<svg class="a" style="left:1136px;top:126px" width="21" height="29"><use href="#gopher" width="21" height="29"/></svg>
<div class="a " style="left:1168.5px;top:126.66px;font:normal 23.5px/29.38px 'Liberation Sans', sans-serif;color:#BBBBBB;">cmd_docker.go</div>
<svg class="a" style="left:1339px;top:132px;" width="16" height="16" viewBox="0 0 16 16"><path d="M1 1 L15 15 M15 1 L1 15" stroke="#6F7274" stroke-width="2"/></svg>
<svg class="a" style="left:1394px;top:126px" width="21" height="29"><use href="#gopher" width="21" height="29"/></svg>
<div class="a " style="left:1426.5px;top:126.66px;font:normal 23.5px/29.38px 'Liberation Sans', sans-serif;color:#BBBBBB;">cmd_env.go</div>
<svg class="a" style="left:1565px;top:132px;" width="16" height="16" viewBox="0 0 16 16"><path d="M1 1 L15 15 M15 1 L1 15" stroke="#6F7274" stroke-width="2"/></svg>
<svg class="a" style="left:1618px;top:126px" width="21" height="29"><use href="#gopher" width="21" height="29"/></svg>
<div class="a " style="left:1650.5px;top:126.66px;font:normal 23.5px/29.38px 'Liberation Sans', sans-serif;color:#BBBBBB;">cmd_gen.go</div>
<svg class="a" style="left:1791px;top:132px;" width="16" height="16" viewBox="0 0 16 16"><path d="M1 1 L15 15 M15 1 L1 15" stroke="#6F7274" stroke-width="2"/></svg>
<svg class="a" style="left:1844px;top:126px" width="21" height="29"><use href="#gopher" width="21" height="29"/></svg>
<div class="a " style="left:1876.5px;top:126.66px;font:normal 23.5px/29.38px 'Liberation Sans', sans-serif;color:#BBBBBB;">cmd.go</div>
<svg class="a" style="left:1967px;top:132px;" width="16" height="16" viewBox="0 0 16 16"><path d="M1 1 L15 15 M15 1 L1 15" stroke="#6F7274" stroke-width="2"/></svg>
<div class="a" style="left:694px;top:168px;width:2336px;height:1454px;background:#2B2B2B;"></div>
<div class="a" style="left:694px;top:168px;width:148px;height:1454px;background:#313335;"></div>
<div class="a" style="left:841px;top:168px;width:2px;height:1454px;background:#555759;"></div>
<div class="a" style="left:844px;top:1362px;width:2186px;height:52px;background:#323232;"></div>
<div class="a" style="left:694px;top:1362px;width:147px;height:52px;background:#303132;"></div>
<div class="a" style="left:844px;top:168px;width:2186px;height:1454px;overflow:hidden;">
<div class="a" style="left:11px;top:54.48px;font:32px/52px 'Liberation Mono', monospace;letter-spacing:-1.2px;"><span style="color:#CC7832">type</span><span style="color:#A9B7C6"> cBuildInput </span><span style="color:#CC7832">struct</span><span style="color:#A9B7C6"> {</span></div>
<div class="a" style="left:11px;top:106.48px;font:32px/52px 'Liberation Mono', monospace;letter-spacing:-1.2px;"><span style="color:#B5C48A">    g</span><span style="color:#A9B7C6">.</span><span style="color:#7EB4C6">Meta</span><span style="color:#A9B7C6">  </span><span style="color:#6A8759">`</span><span style="color:#A9B7C6">name:</span><span style="color:#6A8759">"build"</span><span style="color:#A9B7C6"> config:</span><span style="color:#6A8759">"gfcli.build"</span><span style="color:#6A8759">`</span></div>
<div class="a" style="left:11px;top:158.48px;font:32px/52px 'Liberation Mono', monospace;letter-spacing:-1.2px;"><span style="color:#A9B7C6">    File    </span><span style="color:#CC7832">string</span><span style="color:#A9B7C6"> </span><span style="color:#6A8759">`</span><span style="color:#A9B7C6">name:</span><span style="color:#6A8759">"FILE"</span><span style="color:#A9B7C6"> arg:</span><span style="color:#6A8759">"true"</span><span style="color:#A9B7C6">   brief:</span><span style="color:#6A8759">"building file path"</span><span style="color:#6A8759">`</span></div>
<div class="a" style="left:11px;top:210.48px;font:32px/52px 'Liberation Mono', monospace;letter-spacing:-1.2px;"><span style="color:#A9B7C6">    Name    </span><span style="color:#CC7832">string</span><span style="color:#A9B7C6"> </span><span style="color:#6A8759">`</span><span style="color:#A9B7C6">short:</span><span style="color:#6A8759">"n"</span><span style="color:#A9B7C6"> name:</span><span style="color:#6A8759">"name"</span><span style="color:#A9B7C6">    brief:</span><span style="color:#6A8759">"output binary name"</span><span style="color:#6A8759">`</span></div>
<div class="a" style="left:11px;top:262.48px;font:32px/52px 'Liberation Mono', monospace;letter-spacing:-1.2px;"><span style="color:#A9B7C6">    Version </span><span style="color:#CC7832">string</span><span style="color:#A9B7C6"> </span><span style="color:#6A8759">`</span><span style="color:#A9B7C6">short:</span><span style="color:#6A8759">"v"</span><span style="color:#A9B7C6"> name:</span><span style="color:#6A8759">"version"</span><span style="color:#A9B7C6"> brief:</span><span style="color:#6A8759">"output binary version"</span><span style="color:#6A8759">`</span></div>
<div class="a" style="left:11px;top:314.48px;font:32px/52px 'Liberation Mono', monospace;letter-spacing:-1.2px;"><span style="color:#A9B7C6">    Arch    </span><span style="color:#CC7832">string</span><span style="color:#A9B7C6"> </span><span style="color:#6A8759">`</span><span style="color:#A9B7C6">short:</span><span style="color:#6A8759">"a"</span><span style="color:#A9B7C6"> name:</span><span style="color:#6A8759">"arch"</span><span style="color:#A9B7C6">    brief:</span><span style="color:#6A8759">"output binary architecture, multiple arch separated with ','"</span><span style="color:#6A8759">`</span></div>
<div class="a" style="left:11px;top:366.48px;font:32px/52px 'Liberation Mono', monospace;letter-spacing:-1.2px;"><span style="color:#A9B7C6">    System  </span><span style="color:#CC7832">string</span><span style="color:#A9B7C6"> </span><span style="color:#6A8759">`</span><span style="color:#A9B7C6">short:</span><span style="color:#6A8759">"s"</span><span style="color:#A9B7C6"> name:</span><span style="color:#6A8759">"system"</span><span style="color:#A9B7C6">  brief:</span><span style="color:#6A8759">"output binary system, multiple os separated with ','"</span><span style="color:#6A8759">`</span></div>
<div class="a" style="left:11px;top:418.48px;font:32px/52px 'Liberation Mono', monospace;letter-spacing:-1.2px;"><span style="color:#A9B7C6">    Output  </span><span style="color:#CC7832">string</span><span style="color:#A9B7C6"> </span><span style="color:#6A8759">`</span><span style="color:#A9B7C6">short:</span><span style="color:#6A8759">"o"</span><span style="color:#A9B7C6"> name:</span><span style="color:#6A8759">"output"</span><span style="color:#A9B7C6">  brief:</span><span style="color:#6A8759">"output binary path, used when building single binary file"</span><span style="color:#6A8759">`</span></div>
<div class="a" style="left:11px;top:470.48px;font:32px/52px 'Liberation Mono', monospace;letter-spacing:-1.2px;"><span style="color:#A9B7C6">    Path    </span><span style="color:#CC7832">string</span><span style="color:#A9B7C6"> </span><span style="color:#6A8759">`</span><span style="color:#A9B7C6">short:</span><span style="color:#6A8759">"p"</span><span style="color:#A9B7C6"> name:</span><span style="color:#6A8759">"path"</span><span style="color:#A9B7C6">    brief:</span><span style="color:#6A8759">"output binary directory path, default is './bin'"</span><span style="color:#A9B7C6"> d:</span><span style="color:#6A8759">"./bin"</span><span style="color:#6A8759">`</span></div>
<div class="a" style="left:11px;top:522.48px;font:32px/52px 'Liberation Mono', monospace;letter-spacing:-1.2px;"><span style="color:#A9B7C6">    Extra   </span><span style="color:#CC7832">string</span><span style="color:#A9B7C6"> </span><span style="color:#6A8759">`</span><span style="color:#A9B7C6">short:</span><span style="color:#6A8759">"e"</span><span style="color:#A9B7C6"> name:</span><span style="color:#6A8759">"extra"</span><span style="color:#A9B7C6">   brief:</span><span style="color:#6A8759">"extra custom \"go build\" options"</span><span style="color:#6A8759">`</span></div>
<div class="a" style="left:11px;top:574.48px;font:32px/52px 'Liberation Mono', monospace;letter-spacing:-1.2px;"><span style="color:#A9B7C6">    Mod     </span><span style="color:#CC7832">string</span><span style="color:#A9B7C6"> </span><span style="color:#6A8759">`</span><span style="color:#A9B7C6">short:</span><span style="color:#6A8759">"m"</span><span style="color:#A9B7C6"> name:</span><span style="color:#6A8759">"mod"</span><span style="color:#A9B7C6">     brief:</span><span style="color:#6A8759">"like \"-mod\" option of \"go build\", use \"-m none\" to disable go module"</span><span style="color:#6A8759">`</span></div>
<div class="a" style="left:11px;top:626.48px;font:32px/52px 'Liberation Mono', monospace;letter-spacing:-1.2px;"><span style="color:#A9B7C6">    Cgo     </span><span style="color:#CC7832">bool</span><span style="color:#A9B7C6">   </span><span style="color:#6A8759">`</span><span style="color:#A9B7C6">short:</span><span style="color:#6A8759">"c"</span><span style="color:#A9B7C6"> name:</span><span style="color:#6A8759">"cgo"</span><span style="color:#A9B7C6">     brief:</span><span style="color:#6A8759">"enable or disable cgo feature, it's disabled in default"</span><span style="color:#A9B7C6"> orphan:</span><span style="color:#6A8759">"true"</span><span style="color:#6A8759">`</span></div>
<div class="a" style="left:11px;top:678.48px;font:32px/52px 'Liberation Mono', monospace;letter-spacing:-1.2px;"><span style="color:#A9B7C6">    VarMap  </span><span style="color:#B5C48A">g</span><span style="color:#A9B7C6">.</span><span style="color:#7EB4C6">Map</span><span style="color:#A9B7C6">  </span><span style="color:#6A8759">`</span><span style="color:#A9B7C6">short:</span><span style="color:#6A8759">"r"</span><span style="color:#A9B7C6"> name:</span><span style="color:#6A8759">"varMap"</span><span style="color:#A9B7C6">  brief:</span><span style="color:#6A8759">"custom built embedded variable into binary"</span><span style="color:#6A8759">`</span></div>
<div class="a" style="left:11px;top:730.48px;font:32px/52px 'Liberation Mono', monospace;letter-spacing:-1.2px;"><span style="color:#A9B7C6">    Pack    </span><span style="color:#CC7832">string</span><span style="color:#A9B7C6"> </span><span style="color:#6A8759">`</span><span style="color:#A9B7C6">name:</span><span style="color:#6A8759">"pack"</span><span style="color:#A9B7C6"> brief:</span><span style="color:#6A8759">"pack specified folder into temporary go file before building and removes it after completing"</span><span style="color:#6A8759">`</span></div>
<div class="a" style="left:11px;top:782.48px;font:32px/52px 'Liberation Mono', monospace;letter-spacing:-1.2px;"><span style="color:#A9B7C6">}</span></div>
<div class="a" style="left:11px;top:834.48px;font:32px/52px 'Liberation Mono', monospace;letter-spacing:-1.2px;"><span style="color:#CC7832">type</span><span style="color:#A9B7C6"> cBuildOutput </span><span style="color:#CC7832">struct</span><span style="color:#A9B7C6">{}</span></div>
<div class="a" style="left:11px;top:938.48px;font:32px/52px 'Liberation Mono', monospace;letter-spacing:-1.2px;"><span style="color:#CC7832">func</span><span style="color:#A9B7C6"> (</span><span style="color:#56A8F5">c</span><span style="color:#A9B7C6"> </span><span style="color:#7EB4C6">cBuild</span><span style="color:#A9B7C6">) </span><span style="color:#E8BF6A">Index</span><span style="color:#A9B7C6">(ctx </span><span style="color:#B5C48A">context</span><span style="color:#A9B7C6">.</span><span style="color:#7EB4C6">Context</span><span style="color:#CC7832">,</span><span style="color:#A9B7C6"> in </span><span style="color:#7EB4C6">cBuildInput</span><span style="color:#A9B7C6">) (out *</span><span style="color:#7EB4C6">cBuildOutput</span><span style="color:#CC7832">,</span><span style="color:#A9B7C6"> err </span><span style="color:#CC7832">error</span><span style="color:#A9B7C6">) {</span></div>
<div class="a" style="left:11px;top:990.48px;font:32px/52px 'Liberation Mono', monospace;letter-spacing:-1.2px;"><span style="color:#808080">    // Necessary check.</span></div>
<div class="a" style="left:11px;top:1042.48px;font:32px/52px 'Liberation Mono', monospace;letter-spacing:-1.2px;"><span style="color:#CC7832">    if</span><span style="color:#A9B7C6"> </span><span style="color:#B5C48A">gproc</span><span style="color:#A9B7C6">.</span><span style="color:#C2AC7E">SearchBinary</span><span style="color:#A9B7C6">(</span><span style="color:#6A8759">"go"</span><span style="color:#A9B7C6">) == </span><span style="color:#6A8759">""</span><span style="color:#A9B7C6"> {</span></div>
<div class="a" style="left:11px;top:1094.48px;font:32px/52px 'Liberation Mono', monospace;letter-spacing:-1.2px;"><span style="color:#A9B7C6">        </span><span style="color:#B5C48A">mlog</span><span style="color:#A9B7C6">.</span><span style="color:#C2AC7E">Fatalf</span><span style="color:#A9B7C6">(</span><span style="color:#6A8759">`command "go" not found in your environment, please install golang first to proceed this command`</span><span style="color:#A9B7C6">)</span></div>
<div class="a" style="left:11px;top:1146.48px;font:32px/52px 'Liberation Mono', monospace;letter-spacing:-1.2px;"><span style="color:#A9B7C6">    }</span></div>
<div class="a" style="left:11px;top:1250.48px;font:32px/52px 'Liberation Mono', monospace;letter-spacing:-1.2px;"><span style="color:#A9B7C6">    </span><span style="color:#B5C48A">mlog</span><span style="color:#A9B7C6">.</span><span style="color:#C2AC7E">SetHeaderPrint</span><span style="color:#A9B7C6">(</span><span style="color:#CC7832">true</span><span style="color:#A9B7C6">)</span></div>
<div class="a" style="left:11px;top:1302.48px;font:32px/52px 'Liberation Mono', monospace;letter-spacing:-1.2px;"><span style="color:#CC7832">    var</span><span style="color:#A9B7C6"> (</span></div>
<div class="a" style="left:11px;top:1354.48px;font:32px/52px 'Liberation Mono', monospace;letter-spacing:-1.2px;"><span style="color:#A9B7C6">        parser = </span><span style="color:#B5C48A">gcmd</span><span style="color:#A9B7C6">.</span><span style="color:#C2AC7E">ParserFromCtx</span><span style="color:#A9B7C6">(ctx)</span></div>
<div class="a" style="left:11px;top:1406.48px;font:32px/52px 'Liberation Mono', monospace;letter-spacing:-1.2px;"><span style="color:#A9B7C6">        file   = parser.</span><span style="color:#C2AC7E">GetArg</span><span style="color:#A9B7C6">(</span><span style="color:#6897BB">2</span><span style="color:#A9B7C6">).</span><span style="color:#C2AC7E">String</span><span style="color:#A9B7C6">()</span></div>
<div class="a" style="left:79px;top:1090px;width:2px;height:52px;background:#3B3B3B;"></div>
<div class="a" style="left:79px;top:1350px;width:2px;height:104px;background:#3B3B3B;"></div>
</div>
<div class="a" style="left:695.5px;width:60px;text-align:right;top:170.48px;font:32px/52px 'Liberation Mono', monospace;letter-spacing:-1.2px;color:#5E6165">108</div>
<div class="a" style="left:695.5px;width:60px;text-align:right;top:222.48px;font:32px/52px 'Liberation Mono', monospace;letter-spacing:-1.2px;color:#5E6165">109</div>
<div class="a" style="left:695.5px;width:60px;text-align:right;top:274.48px;font:32px/52px 'Liberation Mono', monospace;letter-spacing:-1.2px;color:#5E6165">110</div>
<div class="a" style="left:695.5px;width:60px;text-align:right;top:326.48px;font:32px/52px 'Liberation Mono', monospace;letter-spacing:-1.2px;color:#5E6165">111</div>
<div class="a" style="left:695.5px;width:60px;text-align:right;top:378.48px;font:32px/52px 'Liberation Mono', monospace;letter-spacing:-1.2px;color:#5E6165">112</div>
<div class="a" style="left:695.5px;width:60px;text-align:right;top:430.48px;font:32px/52px 'Liberation Mono', monospace;letter-spacing:-1.2px;color:#5E6165">113</div>
<div class="a" style="left:695.5px;width:60px;text-align:right;top:482.48px;font:32px/52px 'Liberation Mono', monospace;letter-spacing:-1.2px;color:#5E6165">114</div>
<div class="a" style="left:695.5px;width:60px;text-align:right;top:534.48px;font:32px/52px 'Liberation Mono', monospace;letter-spacing:-1.2px;color:#5E6165">115</div>
<div class="a" style="left:695.5px;width:60px;text-align:right;top:586.48px;font:32px/52px 'Liberation Mono', monospace;letter-spacing:-1.2px;color:#5E6165">116</div>
<div class="a" style="left:695.5px;width:60px;text-align:right;top:638.48px;font:32px/52px 'Liberation Mono', monospace;letter-spacing:-1.2px;color:#5E6165">117</div>
<div class="a" style="left:695.5px;width:60px;text-align:right;top:690.48px;font:32px/52px 'Liberation Mono', monospace;letter-spacing:-1.2px;color:#5E6165">118</div>
<div class="a" style="left:695.5px;width:60px;text-align:right;top:742.48px;font:32px/52px 'Liberation Mono', monospace;letter-spacing:-1.2px;color:#5E6165">119</div>
<div class="a" style="left:695.5px;width:60px;text-align:right;top:794.48px;font:32px/52px 'Liberation Mono', monospace;letter-spacing:-1.2px;color:#5E6165">120</div>
<div class="a" style="left:695.5px;width:60px;text-align:right;top:846.48px;font:32px/52px 'Liberation Mono', monospace;letter-spacing:-1.2px;color:#5E6165">121</div>
<div class="a" style="left:695.5px;width:60px;text-align:right;top:898.48px;font:32px/52px 'Liberation Mono', monospace;letter-spacing:-1.2px;color:#5E6165">122</div>
<div class="a" style="left:695.5px;width:60px;text-align:right;top:950.48px;font:32px/52px 'Liberation Mono', monospace;letter-spacing:-1.2px;color:#5E6165">123</div>
<div class="a" style="left:695.5px;width:60px;text-align:right;top:1002.48px;font:32px/52px 'Liberation Mono', monospace;letter-spacing:-1.2px;color:#5E6165">124</div>
<div class="a" style="left:695.5px;width:60px;text-align:right;top:1054.48px;font:32px/52px 'Liberation Mono', monospace;letter-spacing:-1.2px;color:#5E6165">125</div>
<div class="a" style="left:695.5px;width:60px;text-align:right;top:1106.48px;font:32px/52px 'Liberation Mono', monospace;letter-spacing:-1.2px;color:#5E6165">126</div>
<div class="a" style="left:695.5px;width:60px;text-align:right;top:1158.48px;font:32px/52px 'Liberation Mono', monospace;letter-spacing:-1.2px;color:#5E6165">127</div>
<div class="a" style="left:695.5px;width:60px;text-align:right;top:1210.48px;font:32px/52px 'Liberation Mono', monospace;letter-spacing:-1.2px;color:#5E6165">128</div>
<div class="a" style="left:695.5px;width:60px;text-align:right;top:1262.48px;font:32px/52px 'Liberation Mono', monospace;letter-spacing:-1.2px;color:#5E6165">129</div>
<div class="a" style="left:695.5px;width:60px;text-align:right;top:1314.48px;font:32px/52px 'Liberation Mono', monospace;letter-spacing:-1.2px;color:#5E6165">130</div>
<div class="a" style="left:695.5px;width:60px;text-align:right;top:1366.48px;font:32px/52px 'Liberation Mono', monospace;letter-spacing:-1.2px;color:#A4A3A3">131</div>
<div class="a" style="left:695.5px;width:60px;text-align:right;top:1418.48px;font:32px/52px 'Liberation Mono', monospace;letter-spacing:-1.2px;color:#5E6165">132</div>
<div class="a" style="left:695.5px;width:60px;text-align:right;top:1470.48px;font:32px/52px 'Liberation Mono', monospace;letter-spacing:-1.2px;color:#5E6165">133</div>
<div class="a" style="left:695.5px;width:60px;text-align:right;top:1522.48px;font:32px/52px 'Liberation Mono', monospace;letter-spacing:-1.2px;color:#5E6165">134</div>
<div class="a" style="left:695.5px;width:60px;text-align:right;top:1574.48px;font:32px/52px 'Liberation Mono', monospace;letter-spacing:-1.2px;color:#5E6165">135</div>
<svg class="a" style="left:831px;top:235px;" width="22" height="26" viewBox="0 0 22 26"><path d="M1 1 H21 V15 L11 25 L1 15Z" fill="#313335" stroke="#606366" stroke-width="2"/><path d="M6 9 H16" stroke="#606366" stroke-width="2"/></svg>
<svg class="a" style="left:831px;top:959px;" width="22" height="26" viewBox="0 0 22 26"><path d="M1 25 H21 V11 L11 1 L1 11Z" fill="#313335" stroke="#606366" stroke-width="2"/><path d="M6 17 H16" stroke="#606366" stroke-width="2"/></svg>
<svg class="a" style="left:831px;top:1119px;" width="22" height="26" viewBox="0 0 22 26"><path d="M1 1 H21 V15 L11 25 L1 15Z" fill="#313335" stroke="#606366" stroke-width="2"/><path d="M6 9 H16" stroke="#606366" stroke-width="2"/></svg>
<svg class="a" style="left:831px;top:1223px;" width="22" height="26" viewBox="0 0 22 26"><path d="M1 1 H21 V15 L11 25 L1 15Z" fill="#313335" stroke="#606366" stroke-width="2"/><path d="M6 9 H16" stroke="#606366" stroke-width="2"/></svg>
<svg class="a" style="left:831px;top:1323px;" width="22" height="26" viewBox="0 0 22 26"><path d="M1 25 H21 V11 L11 1 L1 11Z" fill="#313335" stroke="#606366" stroke-width="2"/><path d="M6 17 H16" stroke="#606366" stroke-width="2"/></svg>
<svg class="a" style="left:831px;top:1483px;" width="22" height="26" viewBox="0 0 22 26"><path d="M1 1 H21 V15 L11 25 L1 15Z" fill="#313335" stroke="#606366" stroke-width="2"/><path d="M6 9 H16" stroke="#606366" stroke-width="2"/></svg>
<svg class="a" style="left:1467px;top:311px;" width="90" height="6" viewBox="0 0 90 6"><path d="M0 4 L3 1 L6 4 L9 1 L12 4 L15 1 L18 4 L21 1 L24 4 L27 1 L30 4 L33 1 L36 4 L39 1 L42 4 L45 1 L48 4 L51 1 L54 4 L57 1 L60 4 L63 1 L66 4 L69 1 L72 4 L75 1 L78 4 L81 1 L84 4 L87 1 L90 4" fill="none" stroke="#6A8759" stroke-width="1.3"/></svg>
<svg class="a" style="left:2834px;top:182px;" width="24" height="22" viewBox="0 0 24 22"><path d="M12 0 L24 22 H0Z" fill="#C39A2C"/><rect x="10.5" y="7" width="3" height="7" fill="#2B2B2B"/><rect x="10.5" y="16" width="3" height="3" fill="#2B2B2B"/></svg>
<div class="a " style="left:2864px;top:179.65px;font:normal 23px/28.75px 'Liberation Sans', sans-serif;color:#AFB1B3;">1</div>
<svg class="a" style="left:2890px;top:184px;" width="24" height="25" viewBox="0 0 24 25"><path d="M1 9 L8 16 L22 2" fill="none" stroke="#59A869" stroke-width="4"/><path d="M0 24 L5 19 L9 23 L14 18 L18 22 L23 17" fill="none" stroke="#59A869" stroke-width="1.6"/></svg>
<div class="a " style="left:2920px;top:179.65px;font:normal 23px/28.75px 'Liberation Sans', sans-serif;color:#AFB1B3;">4</div>
<svg class="a" style="left:2956px;top:188px;" width="17" height="10" viewBox="0 0 17 10"><path d="M1 9 L8.5 1.5 L16 9" fill="none" stroke="#AFB1B3" stroke-width="2.2"/></svg>
<svg class="a" style="left:2998px;top:189px;" width="17" height="10" viewBox="0 0 17 10"><path d="M1 1 L8.5 8.5 L16 1" fill="none" stroke="#AFB1B3" stroke-width="2.2"/></svg>
<div class="a" style="left:3008px;top:644px;width:16px;height:122px;border-radius:8px;background:rgba(110,110,110,0.45);"></div>
<div class="a" style="left:3016px;top:216px;width:2px;height:1378px;background:#4E4F51;"></div>
<div class="a" style="left:3016px;top:168px;width:2px;height:4px;background:#4E4F51;"></div>
<div class="a" style="left:3002px;top:1182px;width:28px;height:3px;background:#BE9A2E;"></div>
<div class="a" style="left:856px;top:1594px;width:2174px;height:28px;background:#3A3C3E;"></div>
<div class="a" style="left:861px;top:1599px;width:1993px;height:19px;border-radius:10px;background:#535557;"></div>
<div class="a" style="left:694px;top:1622px;width:2336px;height:45px;background:#313335;"></div>
<div class="a" style="left:694px;top:1622px;width:2336px;height:1px;background:#3A3C3E;"></div>
<div class="a " style="left:863px;top:1629.12px;font:normal 25.6px/32.0px 'Liberation Sans', sans-serif;color:#BBBBBB;">cBuild.Index(ctx context.Context, in cBuildInput) (out *cBuildOutput, err error)</div>
<div class="a" style="left:0px;top:1665px;width:3072px;height:2px;background:#2F3032;"></div>
<div class="a" style="left:0px;top:1667px;width:3072px;height:41px;background:#3D3E41;"></div>
<div class="a" style="left:0px;top:1708px;width:3072px;height:2px;background:#454749;"></div>
<div class="a" style="left:0px;top:1710px;width:3072px;height:40px;background:#3D3E41;"></div>
<svg class="a" style="left:61px;top:1677px;" width="19" height="24" viewBox="0 0 19 24"><circle cx="4" cy="3.5" r="3" fill="#AFB1B3"/><circle cx="4" cy="20.5" r="3" fill="#AFB1B3"/><circle cx="15" cy="7" r="3" fill="#AFB1B3"/><path d="M4 3 V21 M15 7 C15 14 5 12 4 18" fill="none" stroke="#AFB1B3" stroke-width="2.6"/></svg>
<div class="a " style="left:93px;top:1674.64px;font:normal 22.5px/28.12px 'Liberation Sans', sans-serif;color:#BBBBBB;">Git</div>
<svg class="a" style="left:164px;top:1680px;" width="20" height="17" viewBox="0 0 20 17"><path d="M0 1.5 H3.5 M6 1.5 H20 M0 8.5 H3.5 M6 8.5 H20 M0 15.5 H3.5 M6 15.5 H20" stroke="#AFB1B3" stroke-width="3"/></svg>
<div class="a " style="left:195px;top:1674.64px;font:normal 22.5px/28.12px 'Liberation Sans', sans-serif;color:#BBBBBB;">TODO</div>
<svg class="a" style="left:298px;top:1678px;" width="21" height="21" viewBox="0 0 21 21"><circle cx="10.5" cy="10.5" r="10.5" fill="#AFB1B3"/><rect x="9" y="4" width="3" height="8" fill="#3D3E41"/><rect x="9" y="14" width="3" height="3" fill="#3D3E41"/></svg>
<div class="a " style="left:331px;top:1674.64px;font:normal 22.5px/28.12px 'Liberation Sans', sans-serif;color:#BBBBBB;">Problems</div>
<svg class="a" style="left:469px;top:1678px;" width="23" height="21" viewBox="0 0 23 21"><rect x="0" y="0" width="23" height="21" fill="#AFB1B3"/><path d="M3 4 L8 8 L3 12" fill="none" stroke="#3D3E41" stroke-width="2"/><path d="M10 15 H18" stroke="#3D3E41" stroke-width="2"/></svg>
<div class="a " style="left:502px;top:1674.64px;font:normal 22.5px/28.12px 'Liberation Sans', sans-serif;color:#BBBBBB;">Terminal</div>
<svg class="a" style="left:2640px;top:1677px;" width="26" height="26" viewBox="0 0 26 26"><path d="M13 2 A11 11 0 1 0 13 24 H24 V13 A11 11 0 0 0 13 2Z" fill="none" stroke="#AFB1B3" stroke-width="2.6"/></svg>
<div class="a " style="left:2675px;top:1674.64px;font:normal 22.5px/28.12px 'Liberation Sans', sans-serif;color:#BBBBBB;">Event Log</div>
<svg class="a" style="left:2818px;top:1676px;" width="26" height="26" viewBox="0 0 26 26"><rect x="1.2" y="1.2" width="23.6" height="23.6" fill="#1E1F20" stroke="#111" stroke-width="2.4"/><text x="13" y="18.5" font-family="Liberation Sans" font-size="10" font-weight="bold" fill="#AFB1B3" text-anchor="middle">/API</text></svg>
<div class="a " style="left:2852px;top:1674.64px;font:normal 22.5px/28.12px 'Liberation Sans', sans-serif;color:#BBBBBB;">Audit Problems</div>
<svg class="a" style="left:12px;top:1718px;" width="24" height="24" viewBox="0 0 24 24"><path d="M2 6 V22 H18" fill="none" stroke="#AFB1B3" stroke-width="2"/><rect x="6" y="2" width="16" height="16" fill="none" stroke="#AFB1B3" stroke-width="2"/></svg>
<div class="a " style="left:2531px;top:1717.14px;font:normal 22.5px/28.12px 'Liberation Sans', sans-serif;color:#BBBBBB;">131:1</div>
<div class="a " style="left:2604px;top:1717.14px;font:normal 22.5px/28.12px 'Liberation Sans', sans-serif;color:#BBBBBB;">LF</div>
<div class="a " style="left:2652px;top:1717.14px;font:normal 22.5px/28.12px 'Liberation Sans', sans-serif;color:#BBBBBB;">UTF-8</div>
<div class="a " style="left:2743px;top:1717.14px;font:normal 22.5px/28.12px 'Liberation Sans', sans-serif;color:#BBBBBB;">Tab</div>
<svg class="a" style="left:2806px;top:1716px;" width="19" height="26" viewBox="0 0 19 26"><circle cx="4" cy="3.5" r="3" fill="#AFB1B3"/><circle cx="4" cy="22.5" r="3" fill="#AFB1B3"/><circle cx="15.5" cy="3.5" r="3" fill="#AFB1B3"/><path d="M4 3 V23 M15.5 3.5 C15.5 14 5 12 4 19" fill="none" stroke="#AFB1B3" stroke-width="2.6"/></svg>
<div class="a " style="left:2837px;top:1717.14px;font:normal 22.5px/28.12px 'Liberation Sans', sans-serif;color:#BBBBBB;">master</div>
<svg class="a" style="left:2926px;top:1718px;" width="23" height="22" viewBox="0 0 23 22"><path d="M3 10 V6 A5 5 0 0 1 13 6 V0" fill="none" stroke="#AFB1B3" stroke-width="2.5"/><rect x="6" y="10" width="17" height="12" fill="#AFB1B3"/></svg>
<svg class="a" style="left:2972px;top:1716px;" width="33" height="28" viewBox="0 0 33 28"><path d="M6 20 A6 6 0 0 1 5 8 A9 9 0 0 1 22 7 A6.5 6.5 0 0 1 24 18" fill="#AFB1B3"/><text x="14" y="15" font-family="Liberation Sans" font-size="14" font-weight="bold" fill="#3D3E41" text-anchor="middle">?</text><circle cx="25" cy="21" r="5" fill="none" stroke="#AFB1B3" stroke-width="3.5" stroke-dasharray="2.2 1.7"/></svg>
<div class="a" style="left:3025px;top:1718px;width:23px;height:23px;border-radius:50%;background:#5A5B5D"></div>
<div class="a" style="left:3035px;top:1722px;width:3px;height:8px;background:#3D3E41;"></div>
<div class="a" style="left:3035px;top:1733px;width:3px;height:3px;background:#3D3E41;"></div>
</div>
<div class="a" style="left:0;top:0;width:3068px;height:1746px;border:2px solid #68696B;border-top-color:#8C8C8E;border-radius:22px;pointer-events:none;"></div>
</body></html>
